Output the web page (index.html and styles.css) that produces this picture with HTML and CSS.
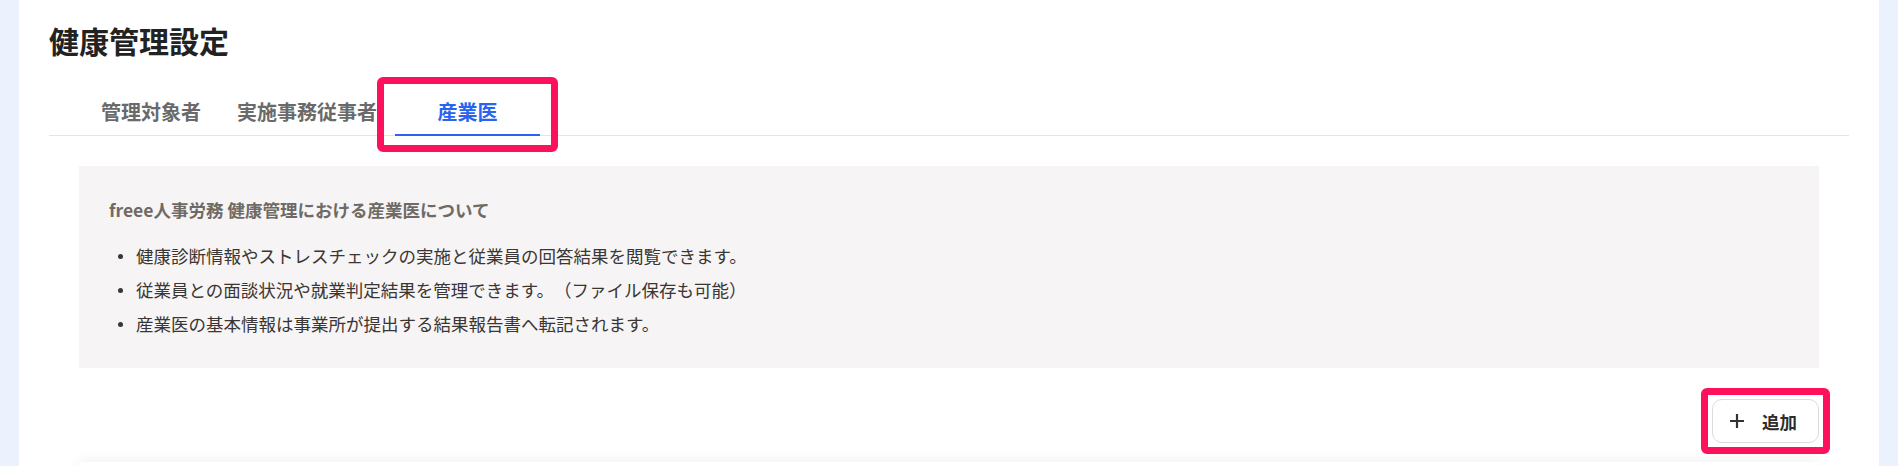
FILE: index.html
```html
<!DOCTYPE html>
<html lang="ja">

<head>
    <meta charset="UTF-8">
    <meta name="viewport" content="width=device-width, initial-scale=1.0">
    <title>健康管理設定</title>

    <link rel="stylesheet" href="styles.css">
</head>

<body>
    <div class="page">
        <div class="card">
            <h1>健康管理設定</h1>

            <!-- タブ -->
            <div class="tabs">
                <div class="tab">管理対象者</div>
                <div class="tab">実施事務従事者</div>
                <div class="tab active">
                    産業医
                    <span class="highlight"></span>
                </div>
            </div>

            <div class="section">
                <div class="infoBox">
                    <div class="infoTitle">freee人事労務 健康管理における産業医について</div>
                    <ul class="infoList">
                        <li>健康診断情報やストレスチェックの実施と従業員の回答結果を閲覧できます。</li>
                        <li>従業員との面談状況や就業判定結果を管理できます。（ファイル保存も可能）</li>
                        <li>産業医の基本情報は事業所が提出する結果報告書へ転記されます。</li>
                    </ul>
                </div>

                <div class="actions">
                    <div class="btn">
                        <svg class="plus" width="16" height="16" viewBox="0 0 16 16">
                            <path d="M8 1v14M1 8h14" stroke="#333" stroke-width="2.2" fill="none" />
                        </svg>
                        <span>追加</span>
                        <span class="highlight"></span>
                    </div>
                </div>

                <!-- 一覧（下にスクロール） -->
                <div class="listCard"></div>
            </div>
        </div>
    </div>
</body>

</html>
```

FILE: styles.css
```css
* {
    box-sizing: border-box;
}

body {
    margin: 0;
    background-color: #ebf2fe;
    font-family: "Noto Sans CJK JP", "Noto Sans", sans-serif;
    color: #2d2d2d;
    text-spacing-trim: space-all;
    overflow: hidden;
}

.page {
    padding: 0 19px;
    height: 466px;
}

.card {
    background-color: #fff;
    height: 100%;
    padding: 25px 30px 0;
}

h1 {
    margin: 0;
    font-size: 30px;
    line-height: 30px;
    font-weight: 700;
    color: #222;
}

.tabs {
    display: flex;
    margin-top: 47px;
    padding-left: 34px;
    border-bottom: 1px solid #e4e4e4;
}

.tab {
    position: relative;
    padding: 0 18px 12px;
    font-size: 20px;
    line-height: 20px;
    font-weight: 700;
    color: #6a6a6a;
    border-bottom: 2px solid transparent;
    margin-bottom: -1px;
}

.tab.active {
    min-width: 145px;
    text-align: center;
    color: #2864f0;
    border-bottom-color: #2864f0;
}

/* 赤枠の注釈 */
.highlight {
    position: absolute;
    border: 7px solid #fe115c;
    border-radius: 6px;
    pointer-events: none;
}

.tab .highlight {
    top: -25px;
    left: -18px;
    right: -18px;
    bottom: -18px;
}

.section {
    padding: 0 30px;
    margin-top: 30px;
}

.infoBox {
    background-color: #f6f4f4;
    padding: 30px 30px 27px;
}

.infoTitle {
    font-size: 17.5px;
    line-height: 27px;
    font-weight: 700;
    color: #6f6a66;
}

.infoList {
    list-style: none;
    margin: 16px 0 0;
    padding: 0;
}

.infoList li {
    position: relative;
    padding-left: 27px;
    font-size: 17.5px;
    line-height: 34px;
    color: #3a3633;
}

.infoList li::before {
    content: "";
    position: absolute;
    left: 9px;
    top: 15px;
    width: 5px;
    height: 5px;
    border-radius: 50%;
    background-color: #3a3633;
}

.actions {
    display: flex;
    justify-content: flex-end;
    margin-top: 31px;
}

.btn {
    position: relative;
    display: flex;
    align-items: center;
    gap: 17px;
    height: 44px;
    padding: 0 21px 0 16px;
    border: 1px solid #dcdcdc;
    border-radius: 10px;
    background-color: #fff;
    font-size: 17.5px;
    font-weight: 700;
    color: #2d2d2d;
}

.btn .highlight {
    top: -12px;
    left: -12px;
    right: -12px;
    bottom: -12px;
}

.plus {
    display: block;
}

.listCard {
    margin-top: 19px;
    height: 60px;
    background-color: #fff;
    box-shadow: 0 -3px 12px rgba(0, 0, 0, 0.05);
}
```
